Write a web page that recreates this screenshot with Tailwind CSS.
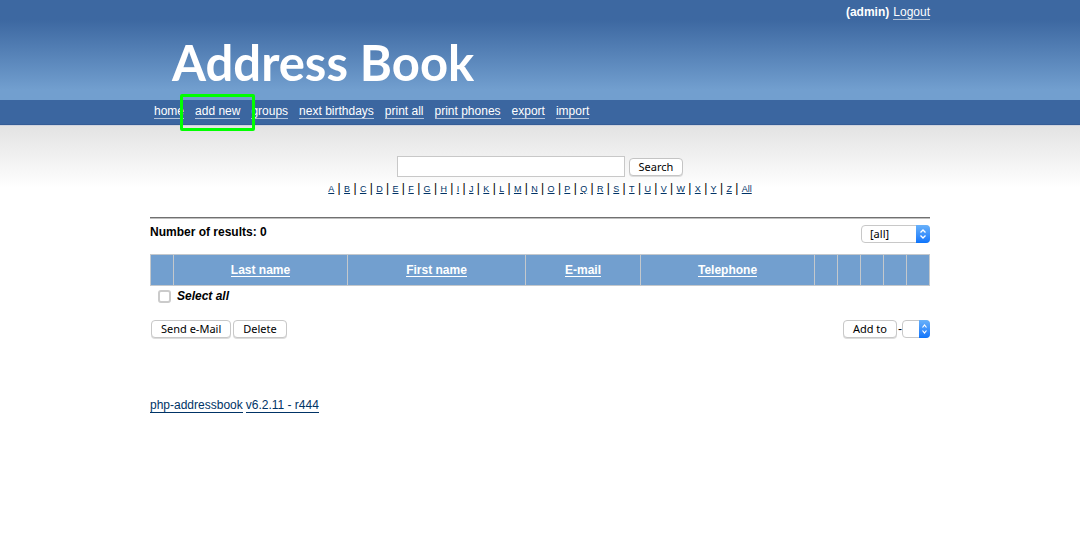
<!DOCTYPE html>
<html lang="en">
<head>
<meta charset="utf-8">
<meta name="viewport" content="width=device-width, initial-scale=1">
<title>Address Book</title>
<script src="https://cdn.jsdelivr.net/npm/@tailwindcss/browser@4"></script>
</head>
<body class="min-h-screen bg-white font-['Liberation_Sans',Arial,sans-serif] text-xs leading-4 text-black">
<header class="bg-linear-to-b from-[#3d68a1] from-20% to-[#729fcf] to-90%">
  <div class="mx-auto flex min-h-[100px] max-w-[780px] flex-col text-white">
    <p class="flex items-baseline justify-end gap-1 pt-1"><b>(admin)</b> <a href="#" class="border-b border-[#aebfd6] leading-[13px]">Logout</a></p>
    <h1 class="pt-3 pl-[22px] font-['Lato',sans-serif] text-[49px] leading-[60px] font-bold">Address Book</h1>
  </div>
</header>
<nav class="border-b border-[#355d96] bg-[#3b66a0] text-white">
  <ul class="mx-auto flex h-6 max-w-[780px] gap-[11px] px-1 pt-[5px]">
    <li><a href="#" class="block border-b border-[#b1c2d9] leading-[13px]">home</a></li>
    <li class="relative"><a href="#" class="block border-b border-[#b1c2d9] leading-[13px]">add new</a><span class="pointer-events-none absolute -inset-x-[15px] -top-[11px] z-10 h-[37px] rounded-[2px] border-3 border-[#00ff00]"></span></li>
    <li><a href="#" class="block border-b border-[#b1c2d9] leading-[13px]">groups</a></li>
    <li><a href="#" class="block border-b border-[#b1c2d9] leading-[13px]">next birthdays</a></li>
    <li><a href="#" class="block border-b border-[#b1c2d9] leading-[13px]">print all</a></li>
    <li><a href="#" class="block border-b border-[#b1c2d9] leading-[13px]">print phones</a></li>
    <li><a href="#" class="block border-b border-[#b1c2d9] leading-[13px]">export</a></li>
    <li><a href="#" class="block border-b border-[#b1c2d9] leading-[13px]">import</a></li>
  </ul>
</nav>
<div class="border-t border-[#d0d4de] bg-linear-to-b from-[#e3e3e3] to-white to-[62px]">
<main class="mx-auto max-w-[780px] pt-[30px]">
  <form class="flex items-center justify-center gap-1">
    <input type="text" aria-label="Search" class="h-[21px] w-[228px] border border-[#c8c8c8] bg-white px-1">
    <button type="button" class="h-[18px] rounded-[4px] border border-[#c4c4c4] bg-white px-[9px] font-['Noto_Sans',sans-serif] text-[11px] leading-4 shadow-[0_1px_0_#ddd]">Search</button>
  </form>
  <p class="mt-[3px] text-center leading-4">
    <a href="#" class="text-[9px] text-[#003366] underline">A</a> |
    <a href="#" class="text-[9px] text-[#003366] underline">B</a> |
    <a href="#" class="text-[9px] text-[#003366] underline">C</a> |
    <a href="#" class="text-[9px] text-[#003366] underline">D</a> |
    <a href="#" class="text-[9px] text-[#003366] underline">E</a> |
    <a href="#" class="text-[9px] text-[#003366] underline">F</a> |
    <a href="#" class="text-[9px] text-[#003366] underline">G</a> |
    <a href="#" class="text-[9px] text-[#003366] underline">H</a> |
    <a href="#" class="text-[9px] text-[#003366] underline">I</a> |
    <a href="#" class="text-[9px] text-[#003366] underline">J</a> |
    <a href="#" class="text-[9px] text-[#003366] underline">K</a> |
    <a href="#" class="text-[9px] text-[#003366] underline">L</a> |
    <a href="#" class="text-[9px] text-[#003366] underline">M</a> |
    <a href="#" class="text-[9px] text-[#003366] underline">N</a> |
    <a href="#" class="text-[9px] text-[#003366] underline">O</a> |
    <a href="#" class="text-[9px] text-[#003366] underline">P</a> |
    <a href="#" class="text-[9px] text-[#003366] underline">Q</a> |
    <a href="#" class="text-[9px] text-[#003366] underline">R</a> |
    <a href="#" class="text-[9px] text-[#003366] underline">S</a> |
    <a href="#" class="text-[9px] text-[#003366] underline">T</a> |
    <a href="#" class="text-[9px] text-[#003366] underline">U</a> |
    <a href="#" class="text-[9px] text-[#003366] underline">V</a> |
    <a href="#" class="text-[9px] text-[#003366] underline">W</a> |
    <a href="#" class="text-[9px] text-[#003366] underline">X</a> |
    <a href="#" class="text-[9px] text-[#003366] underline">Y</a> |
    <a href="#" class="text-[9px] text-[#003366] underline">Z</a> |
    <a href="#" class="text-[9px] text-[#003366] underline">All</a>
  </p>
  <hr class="mt-5 border-t border-b border-t-[#707070] border-b-[#c0c0c0]">
  <div class="flex items-start justify-between pt-[5px]">
    <b>Number of results: 0</b>
    <div class="relative mt-px h-[18px]">
      <select aria-label="Group filter" class="block h-[18px] w-[69px] appearance-none rounded-[4px] border border-[#c8c8c8] bg-white pl-2 font-['Noto_Sans',sans-serif] text-[11px] leading-4"><option>[all]</option></select>
      <svg class="pointer-events-none absolute top-0 right-0 h-[18px] w-[14px] rounded-r-[4px] bg-linear-to-b from-[#68b1fa] to-[#0a74fb]" viewBox="0 0 14 18" fill="none" stroke="#fff" stroke-width="1.3" aria-hidden="true"><path d="M4.5 7.5 7 5l2.5 2.5M4.5 10.5 7 13l2.5-2.5"/></svg>
    </div>
  </div>
  <table class="mt-[11px] w-full table-fixed border-collapse bg-[#729fcf] text-white">
    <colgroup><col class="w-[23px]"><col class="w-[174px]"><col class="w-[178px]"><col class="w-[115px]"><col class="w-[174px]"><col class="w-[23px]"><col class="w-[23px]"><col class="w-[23px]"><col class="w-[23px]"><col class="w-[23px]"></colgroup>
    <thead><tr class="h-[31px]">
      <th class="border border-[#c4c8cc]"></th>
      <th class="border border-[#c4c8cc]"><a href="#" class="inline-block border-b border-white leading-[12px]">Last name</a></th>
      <th class="border border-[#c4c8cc]"><a href="#" class="inline-block border-b border-white leading-[12px]">First name</a></th>
      <th class="border border-[#c4c8cc]"><a href="#" class="inline-block border-b border-white leading-[12px]">E-mail</a></th>
      <th class="border border-[#c4c8cc]"><a href="#" class="inline-block border-b border-white leading-[12px]">Telephone</a></th>
      <th class="border border-[#c4c8cc]"></th>
      <th class="border border-[#c4c8cc]"></th>
      <th class="border border-[#c4c8cc]"></th>
      <th class="border border-[#c4c8cc]"></th>
      <th class="border border-[#c4c8cc]"></th>
    </tr></thead>
  </table>
  <label class="flex items-center gap-[6px] pt-[2px] pl-2 font-bold italic"><input type="checkbox" class="size-[13px] appearance-none rounded-[3px] border-2 border-[#cbcbcb] bg-white checked:bg-[#0a74fb]">Select all</label>
  <div class="flex items-center justify-between pt-4">
    <div class="flex gap-[2px] pl-px">
      <button type="button" class="h-[18px] rounded-[4px] border border-[#c8c8c8] bg-white px-[9px] font-['Noto_Sans',sans-serif] text-[11px] leading-4 shadow-[0_1px_0_#ddd]">Send e-Mail</button>
      <button type="button" class="h-[18px] rounded-[4px] border border-[#c8c8c8] bg-white px-[9px] font-['Noto_Sans',sans-serif] text-[11px] leading-4 shadow-[0_1px_0_#ddd]">Delete</button>
    </div>
    <div class="flex items-center">
      <button type="button" class="mr-px h-[18px] rounded-[4px] border border-[#c8c8c8] bg-white px-[9px] font-['Noto_Sans',sans-serif] text-[11px] leading-4 shadow-[0_1px_0_#ddd]">Add to</button>-
      <div class="relative h-[18px]">
        <select aria-label="Target group" class="block h-[18px] w-7 appearance-none rounded-[4px] border border-[#c8c8c8] bg-white"><option></option></select>
        <svg class="pointer-events-none absolute top-0 right-0 h-[18px] w-[11px] rounded-r-[4px] bg-linear-to-b from-[#68b1fa] to-[#0a74fb]" viewBox="0 0 11 18" fill="none" stroke="#fff" stroke-width="1.2" aria-hidden="true"><path d="M3.5 7.5 5.5 5l2 2.5M3.5 10.5l2 2.5 2-2.5"/></svg>
      </div>
    </div>
  </div>
</main>
</div>
<footer class="mx-auto flex max-w-[780px] gap-[3px] pt-[61px] text-[#003366]">
  <a href="#" class="border-b border-[#003366] leading-[13px]">php-addressbook</a>
  <a href="#" class="border-b border-[#003366] leading-[13px]">v6.2.11 - r444</a>
</footer>
</body>
</html>
